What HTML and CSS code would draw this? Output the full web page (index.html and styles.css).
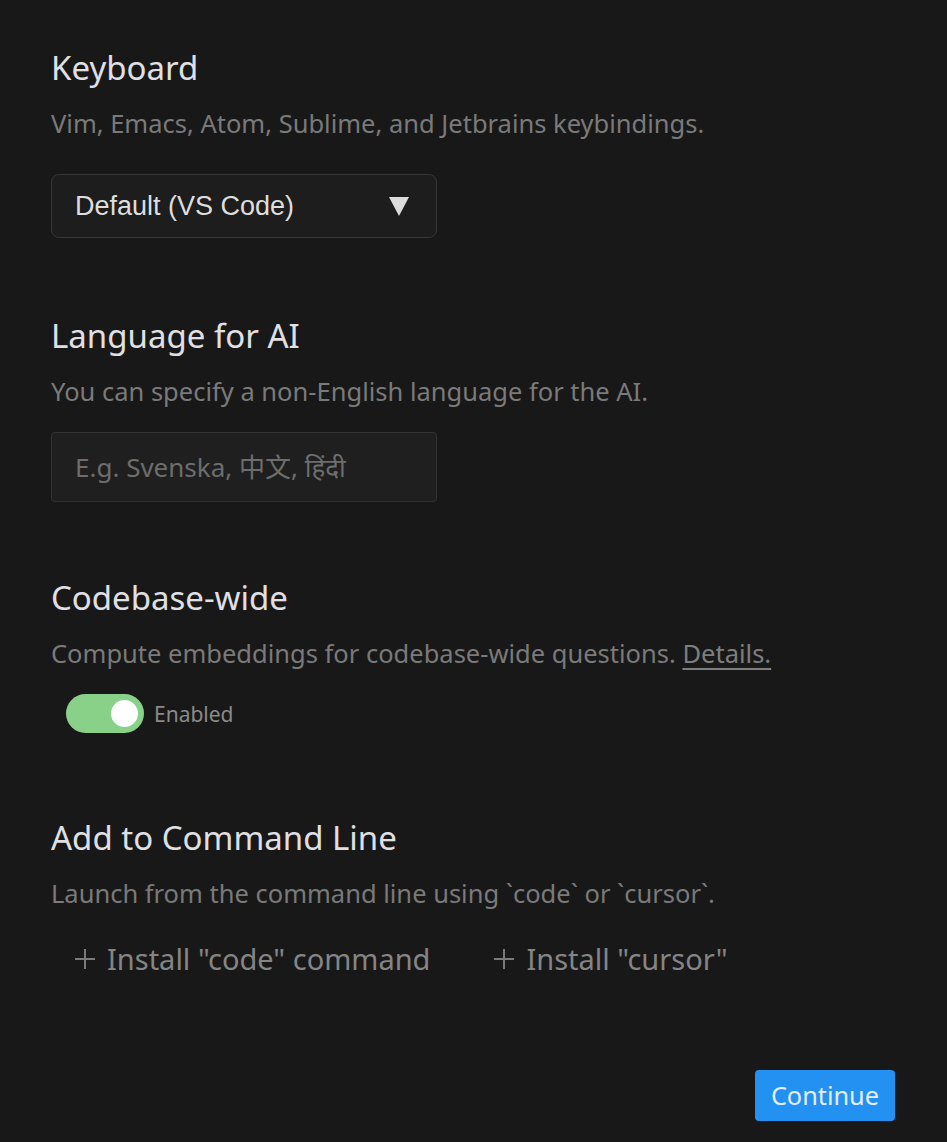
FILE: index.html
```html
<!DOCTYPE html>
<html lang="en">
<head>
<meta charset="utf-8">
<title>Settings</title>
<link rel="stylesheet" href="styles.css">
</head>
<body>
<main class="page">
  <section class="section section-keyboard">
    <h2 class="title">Keyboard</h2>
    <p class="desc">Vim, Emacs, Atom, Sublime, and Jetbrains keybindings.</p>
    <div class="select">
      <span class="select-label">Default (VS Code)</span>
      <svg class="select-arrow" width="20" height="19" viewBox="0 0 20 19"><polygon points="0,0 20,0 10,19" fill="#dcdcdc"/></svg>
    </div>
  </section>

  <section class="section section-language">
    <h2 class="title">Language for AI</h2>
    <p class="desc">You can specify a non-English language for the AI.</p>
    <input class="text-input" type="text" placeholder="E.g. Svenska, 中文, हिंदी">
  </section>

  <section class="section section-codebase">
    <h2 class="title">Codebase-wide</h2>
    <p class="desc">Compute embeddings for codebase-wide questions. <a class="link" href="#">Details.</a></p>
    <div class="toggle-row">
      <span class="toggle"><span class="knob"></span></span>
      <span class="toggle-label">Enabled</span>
    </div>
  </section>

  <section class="section section-cli">
    <h2 class="title">Add to Command Line</h2>
    <p class="desc">Launch from the command line using `code` or `cursor`.</p>
    <div class="install-row">
      <button class="install"><svg class="plus" width="20" height="20" viewBox="0 0 20 20"><path d="M0 10H20M10 0V20" stroke="#7a7a7a" stroke-width="2"/></svg><span>Install "code" command</span></button>
      <button class="install"><svg class="plus" width="20" height="20" viewBox="0 0 20 20"><path d="M0 10H20M10 0V20" stroke="#7a7a7a" stroke-width="2"/></svg><span>Install "cursor"</span></button>
    </div>
  </section>

  <div class="footer">
    <button class="continue">Continue</button>
  </div>
</main>
</body>
</html>
```

FILE: styles.css
```css
html, body {
  margin: 0;
  padding: 0;
  background: #181818;
}

body {
  font-family: "Noto Sans", "Open Sans", "Noto Sans CJK SC", sans-serif;
  color: #e1e1e1;
}

.page {
  padding: 48px 52px 22px 51px;
  display: flex;
  flex-direction: column;
}

.section-keyboard { padding-bottom: 78px; }
.section-language { padding-bottom: 76px; }
.section-codebase { padding-bottom: 85px; }

.title {
  margin: 0 0 19px 0;
  font-size: 33px;
  line-height: 40px;
  font-weight: 400;
  color: #e0e0e4;
}

.desc {
  margin: 0;
  font-size: 25.5px;
  line-height: 32px;
  color: #7a7a7a;
}

.link {
  color: #7e7e7e;
  text-decoration: underline;
  text-underline-offset: 5px;
  text-decoration-thickness: 2px;
}

.select {
  margin-top: 35px;
  box-sizing: border-box;
  width: 386px;
  height: 64px;
  border: 1px solid #363636;
  border-radius: 8px;
  background: #1d1d1d;
  display: flex;
  align-items: center;
  justify-content: space-between;
  padding: 0 27px 0 23px;
}

.select-label {
  font-family: "Liberation Sans", Arial, sans-serif;
  font-size: 27px;
  color: #dedede;
}

.select-arrow { display: block; }

.text-input {
  margin-top: 25px;
  box-sizing: border-box;
  width: 386px;
  height: 70px;
  border: 1px solid #323232;
  border-radius: 4px;
  background: #1f1f1f;
  padding: 0 23px;
  font-family: "Noto Sans", "Noto Sans CJK SC", "Noto Sans Devanagari", sans-serif;
  font-size: 26px;
  color: #dedede;
  outline: none;
  display: block;
}

.text-input::placeholder {
  color: #6d6d6d;
}

.toggle-row {
  margin-top: 25px;
  padding-left: 15px;
  display: flex;
  align-items: center;
  gap: 10px;
}

.toggle {
  box-sizing: border-box;
  width: 78px;
  height: 39px;
  border-radius: 20px;
  background: #89d188;
  display: flex;
  align-items: center;
  justify-content: flex-end;
  padding-right: 6px;
}

.knob {
  width: 27px;
  height: 27px;
  border-radius: 50%;
  background: #ffffff;
}

.toggle-label {
  font-size: 21px;
  color: #8a8a8a;
}

.install-row {
  margin-top: 20px;
  display: flex;
  gap: 16px;
}

.install {
  background: transparent;
  border: none;
  padding: 10px 24px;
  display: flex;
  align-items: center;
  gap: 12px;
  font-family: "Noto Sans", "Open Sans", sans-serif;
  font-size: 29px;
  line-height: 40px;
  color: #858585;
  cursor: pointer;
}

.plus {
  display: block;
  flex: none;
  margin-top: -1px;
}

.footer {
  margin-top: 81px;
  display: flex;
  justify-content: flex-end;
}

.continue {
  height: 51px;
  padding: 0 16px;
  border: none;
  border-radius: 4px;
  background: #2391f2;
  color: #e6edf5;
  font-family: "Noto Sans", "Open Sans", sans-serif;
  font-size: 25.3px;
  line-height: 51px;
}
```
